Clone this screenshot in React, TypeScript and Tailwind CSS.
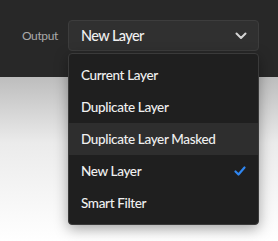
import { useState } from 'react';

const options = ['Current Layer', 'Duplicate Layer', 'Duplicate Layer Masked', 'New Layer', 'Smart Filter'];

export default function App() {
  const [value, setValue] = useState('New Layer');
  const [hovered] = useState('Duplicate Layer Masked');

  return (
    <div
      className="relative h-[241px] w-[278px] overflow-hidden bg-white"
      style={{ fontFamily: 'Lato, "Noto Sans", sans-serif' }}
    >
      <div className="flex h-[77px] items-start bg-[#282828] pt-[20px]">
        <span className="mt-[7px] w-[68px] whitespace-nowrap pl-[22px] text-[12px] tracking-[-0.4px] text-[#aaaaaa]">Output</span>
        <button className="flex h-[31px] w-[191px] items-center justify-between rounded-[4px] border border-[#3d3d3d] bg-[#303030] pl-[12px] pr-[11px] text-[14.5px] font-medium tracking-[-0.6px] text-[#f0f0f0]">
          {value}
          <svg width="12" height="8" viewBox="0 0 12 8" fill="none">
            <path d="M1.5 1.5 6 6l4.5-4.5" stroke="#d4d4d4" strokeWidth="2" strokeLinecap="round" strokeLinejoin="round" />
          </svg>
        </button>
      </div>
      <div className="h-[164px] bg-gradient-to-b from-[#bdbdbd] via-[#ebebeb] via-40% to-white" />

      <ul className="absolute left-[68px] top-[53px] w-[191px] rounded-[4px] border border-[#3a3a3a] bg-[#1f1f1f] py-[5px] shadow-[0_4px_14px_rgba(0,0,0,0.35)]">
        {options.map((opt) => (
          <li
            key={opt}
            onClick={() => setValue(opt)}
            className={`flex h-[32px] items-center justify-between whitespace-nowrap pl-[12px] pr-[12px] text-[13.5px] font-medium tracking-[-0.35px] text-[#f0f0f0] ${
              opt === hovered ? 'bg-[#2e2e2e]' : ''
            }`}
          >
            {opt}
            {opt === value && (
              <svg width="12" height="10" viewBox="0 0 12 10" fill="none">
                <path d="M1.5 5.5 4.5 8.5 10.5 1.5" stroke="#2f86f0" strokeWidth="2.2" strokeLinecap="round" strokeLinejoin="round" />
              </svg>
            )}
          </li>
        ))}
      </ul>
    </div>
  );
}
